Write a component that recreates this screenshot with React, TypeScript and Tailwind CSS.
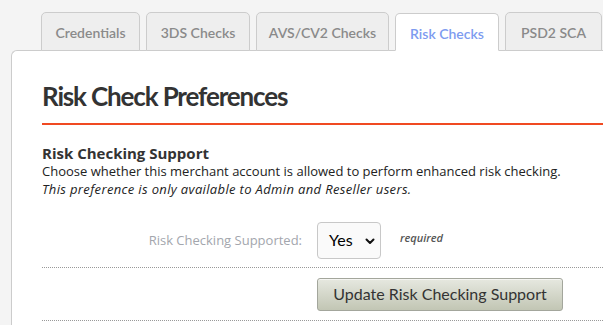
import React from "react";

const tabs = [
  { label: "Credentials", w: "w-[99px]", active: false },
  { label: "3DS Checks", w: "w-[104px]", active: false },
  { label: "AVS/CV2 Checks", w: "w-[133px]", active: false },
  { label: "Risk Checks", w: "w-[104px]", active: true },
  { label: "PSD2 SCA", w: "w-[97px]", active: false },
];

export default function App() {
  return (
    <div className="w-[603px] h-[325px] overflow-hidden bg-[#f4f4f4] pt-[12px] pl-[11px]">
      <div className="relative z-10 -mb-px flex items-start gap-[6px] pl-[30px]">
        {tabs.map((t) =>
          t.active ? (
            <div
              key={t.label}
              className={`${t.w} mt-px flex h-[38px] shrink-0 items-center justify-center rounded-t-[5px] border border-b-white border-[#cccccc] bg-white pt-[3px] font-['Lato',sans-serif] text-[14px] font-semibold text-[#7d9bf0]`}
            >
              {t.label}
            </div>
          ) : (
            <div
              key={t.label}
              className={`${t.w} flex h-[39px] shrink-0 items-center justify-center rounded-t-[5px] border border-[#cccccc] bg-[#eeeeee] pt-[1px] font-['Lato',sans-serif] text-[14px] font-semibold text-[#8a8a8a]`}
            >
              {t.label}
            </div>
          )
        )}
      </div>
      <div className="w-[640px] rounded-tl-[6px] border-l border-t border-[#cccccc] bg-white pl-[30px] pt-[30px] pb-[40px]">
        <h1 className="border-b-2 border-[#f04a22] pb-[11px] font-['Lato',sans-serif] text-[26px] font-bold leading-[31px] tracking-[-1.15px] text-[#333333]">
          Risk Check Preferences
        </h1>
        <h3 className="mt-[19px] font-['Open_Sans',sans-serif] text-[15px] font-bold leading-[19px] text-[#333333]">
          Risk Checking Support
        </h3>
        <p className="font-['Open_Sans',sans-serif] text-[13px] leading-[17.5px] text-[#222222]">
          Choose whether this merchant account is allowed to perform enhanced risk checking.
        </p>
        <p className="font-['Open_Sans',sans-serif] text-[13px] italic leading-[17.5px] tracking-[0.35px] text-[#222222]">
          This preference is only available to Admin and Reseller users.
        </p>
        <div className="mt-[23.5px] grid grid-cols-[275px_1fr] items-center border-b border-dotted border-[#999999] pb-[8px]">
          <div className="pr-[15px] pt-[1px] text-right font-['Open_Sans',sans-serif] text-[13px] text-[#a3a6ad]">
            Risk Checking Supported:
          </div>
          <div className="flex items-center">
            <div className="relative flex h-[37px] w-[64px] items-center rounded-[4px] border border-[#c8c8c8] bg-[#fafafa] pl-[11px] font-['Lato',sans-serif] text-[16px] text-black">
              Yes
              <svg
                className="absolute right-[5px] top-[15px]"
                width="10"
                height="7"
                viewBox="0 0 10 7"
                fill="none"
              >
                <path d="M1.5 1.5 L5 5 L8.5 1.5" stroke="#111" strokeWidth="2" strokeLinecap="round" strokeLinejoin="round" />
              </svg>
            </div>
            <span className="ml-[19px] pb-[3px] font-['Open_Sans',sans-serif] text-[11px] font-semibold italic text-[#555555]">
              required
            </span>
          </div>
        </div>
        <div className="grid grid-cols-[275px_1fr] border-b border-dotted border-[#999999] pb-[9px] pt-[10px]">
          <div />
          <div>
            <button className="h-[33px] w-[246px] rounded-[3px] border border-[#a3a69c] bg-gradient-to-b from-[#e6e8e0] to-[#c2c6b4] font-['Lato',sans-serif] text-[16px] text-[#333333] shadow-[inset_0_1px_0_rgba(255,255,255,0.6)]">
              Update Risk Checking Support
            </button>
          </div>
        </div>
      </div>
    </div>
  );
}
